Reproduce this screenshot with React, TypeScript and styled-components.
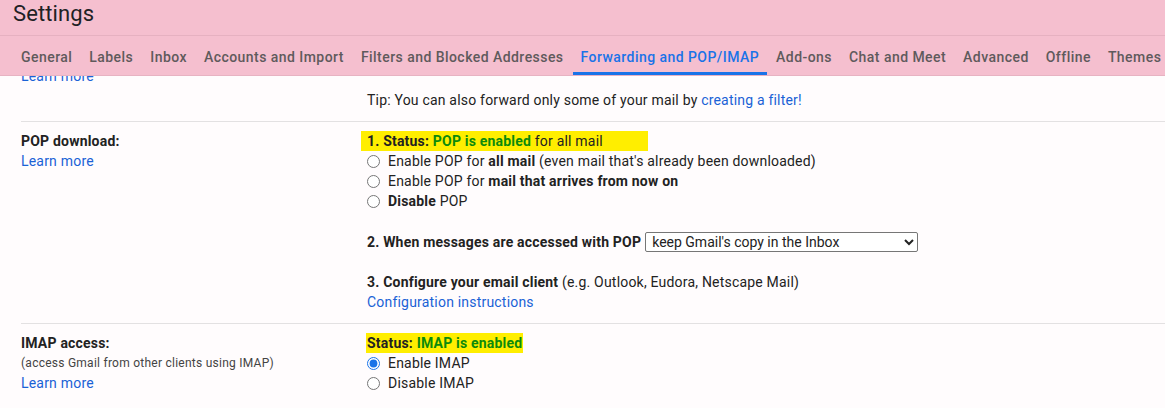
import { useLayoutEffect, useRef } from 'react';
import styled, { createGlobalStyle } from 'styled-components';

const GlobalStyle = createGlobalStyle`
  html, body {
    margin: 0;
    padding: 0;
    background: #fffcfd;
  }
  body {
    font-family: Roboto, "Liberation Sans", Arial, sans-serif;
    color: #222222;
    overflow: hidden;
  }
`;

const TABS = [
  'General',
  'Labels',
  'Inbox',
  'Accounts and Import',
  'Filters and Blocked Addresses',
  'Forwarding and POP/IMAP',
  'Add-ons',
  'Chat and Meet',
  'Advanced',
  'Offline',
  'Themes',
];

const ACTIVE_TAB = 'Forwarding and POP/IMAP';

// the page is shown scrolled a little, so the forwarding row slides under the header
const SCROLL_OFFSET = 39;

const App = () => {
  const scrollerRef = useRef<HTMLDivElement>(null);

  useLayoutEffect(() => {
    if (scrollerRef.current) scrollerRef.current.scrollTop = SCROLL_OFFSET;
  }, []);

  return (
    <Page ref={scrollerRef}>
      <GlobalStyle />
      <Header>
        <TitleBar>
          <Title>Settings</Title>
        </TitleBar>
        <TabBar>
          {TABS.map((tab) => (
            <Tab key={tab} $active={tab === ACTIVE_TAB}>
              {tab}
            </Tab>
          ))}
        </TabBar>
      </Header>

      <Content>
        <Section>
          <LabelCell>
            <Label>Forwarding:</Label>
            <Link>Learn more</Link>
          </LabelCell>
          <ValueCell>
            <Line>Add a forwarding address</Line>
            <Tip>
              Tip: You can also forward only some of your mail by <Link>creating a filter!</Link>
            </Tip>
          </ValueCell>
        </Section>

        <Section $divided>
          <LabelCell>
            <Label>POP download:</Label>
            <Link>Learn more</Link>
          </LabelCell>
          <ValueCell>
            <Highlight $padded>
              <b>1. Status: </b>
              <Green>POP is enabled</Green> for all mail
            </Highlight>
            <Option>
              <Radio type="radio" name="pop" />
              <span>
                Enable POP for <b>all mail</b> (even mail that's already been downloaded)
              </span>
            </Option>
            <Option>
              <Radio type="radio" name="pop" />
              <span>
                Enable POP for <b>mail that arrives from now on</b>
              </span>
            </Option>
            <Option>
              <Radio type="radio" name="pop" />
              <span>
                <b>Disable</b> POP
              </span>
            </Option>

            <SelectRow>
              <b>2. When messages are accessed with POP</b>
              <Select defaultValue="keep">
                <option value="keep">keep Gmail's copy in the Inbox</option>
                <option value="read">mark Gmail's copy as read</option>
                <option value="archive">archive Gmail's copy</option>
                <option value="delete">delete Gmail's copy</option>
              </Select>
            </SelectRow>

            <Step>
              <Line>
                <b>3. Configure your email client</b> (e.g. Outlook, Eudora, Netscape Mail)
              </Line>
              <Link>Configuration instructions</Link>
            </Step>
          </ValueCell>
        </Section>

        <Section $divided>
          <LabelCell>
            <Label>IMAP access:</Label>
            <Hint>(access Gmail from other clients using IMAP)</Hint>
            <Link>Learn more</Link>
          </LabelCell>
          <ValueCell>
            <Highlight>
              <b>Status: </b>
              <Green>IMAP is enabled</Green>
            </Highlight>
            <Option>
              <Radio type="radio" name="imap" defaultChecked />
              <span>Enable IMAP</span>
            </Option>
            <Option>
              <Radio type="radio" name="imap" />
              <span>Disable IMAP</span>
            </Option>
          </ValueCell>
        </Section>
      </Content>
    </Page>
  );
};

const Page = styled.div`
  width: 1165px;
  height: 408px;
  overflow: hidden;
`;

const Header = styled.header`
  position: sticky;
  top: 0;
  z-index: 1;
  background: #f5bfcf;
  border-bottom: 1px solid #e7b3c2;
`;

const TitleBar = styled.div`
  height: 36px;
  padding: 2px 0 0 13px;
  box-sizing: border-box;
  border-bottom: 1px solid #e6b1c1;
`;

const Title = styled.h1`
  margin: 0;
  font-family: Roboto, "Liberation Sans", sans-serif;
  font-size: 22px;
  line-height: 24px;
  font-weight: 400;
  color: #202124;
  letter-spacing: 0.1px;
`;

const TabBar = styled.nav`
  display: flex;
  height: 39px;
  padding-left: 13px;
  gap: 1px;
  white-space: nowrap;
`;

const Tab = styled.div<{ $active?: boolean }>`
  display: flex;
  align-items: center;
  padding: 5px 8px 0;
  font-size: 14px;
  font-weight: 500;
  letter-spacing: 0.45px;
  color: ${({ $active }) => ($active ? '#1a73e8' : '#5f5a5c')};
  border-bottom: 3px solid ${({ $active }) => ($active ? '#1a73e8' : 'transparent')};
`;

const Content = styled.main`
  padding-left: 21px;
  padding-bottom: 80px;
  font-size: 14px;
  line-height: 20px;
  letter-spacing: 0.2px;
`;

const Section = styled.section<{ $divided?: boolean }>`
  display: grid;
  grid-template-columns: 346px 1fr;
  padding: 9px 0 11px;
  border-top: ${({ $divided }) => ($divided ? '1px solid #e3e1e2' : 'none')};
`;

const LabelCell = styled.div`
  display: flex;
  flex-direction: column;
  align-items: flex-start;
`;

const ValueCell = styled.div`
  display: flex;
  flex-direction: column;
  align-items: flex-start;

  & b {
    font-weight: 700;
  }
`;

const Label = styled.div`
  font-weight: 700;
  color: #222222;
`;

const Hint = styled.div`
  font-size: 12px;
  letter-spacing: 0.25px;
  color: #444444;
`;

const Link = styled.span`
  color: #1a62d6;
  cursor: pointer;
`;

const Line = styled.div`
  color: #222222;
`;

const Tip = styled.div`
  margin-top: 24px;
  color: #222222;
`;

const Highlight = styled.div<{ $padded?: boolean }>`
  background: #ffee00;
  margin-left: ${({ $padded }) => ($padded ? '-6px' : '-1px')};
  padding: ${({ $padded }) => ($padded ? '0 45px 0 6px' : '0 1px')};
  color: #222222;
`;

const Green = styled.span`
  color: #0c8a0c;
  font-weight: 700;
`;

const Option = styled.label`
  display: flex;
  align-items: center;
  gap: 8px;
  color: #222222;
`;

const Radio = styled.input`
  width: 13px;
  height: 13px;
  margin: 0;
  accent-color: #1a73e8;
`;

const SelectRow = styled.div`
  display: flex;
  align-items: center;
  gap: 4px;
  margin-top: 21px;
`;

const Step = styled.div`
  display: flex;
  flex-direction: column;
  align-items: flex-start;
  margin-top: 20px;
`;

const Select = styled.select`
  width: 273px;
  height: 20px;
  font-family: Roboto, "Liberation Sans", sans-serif;
  font-size: 14px;
  color: #222222;
  background: #ffffff;
  border: 1px solid #767676;
  border-radius: 2px;
  padding: 0 2px;
`;

export default App;
